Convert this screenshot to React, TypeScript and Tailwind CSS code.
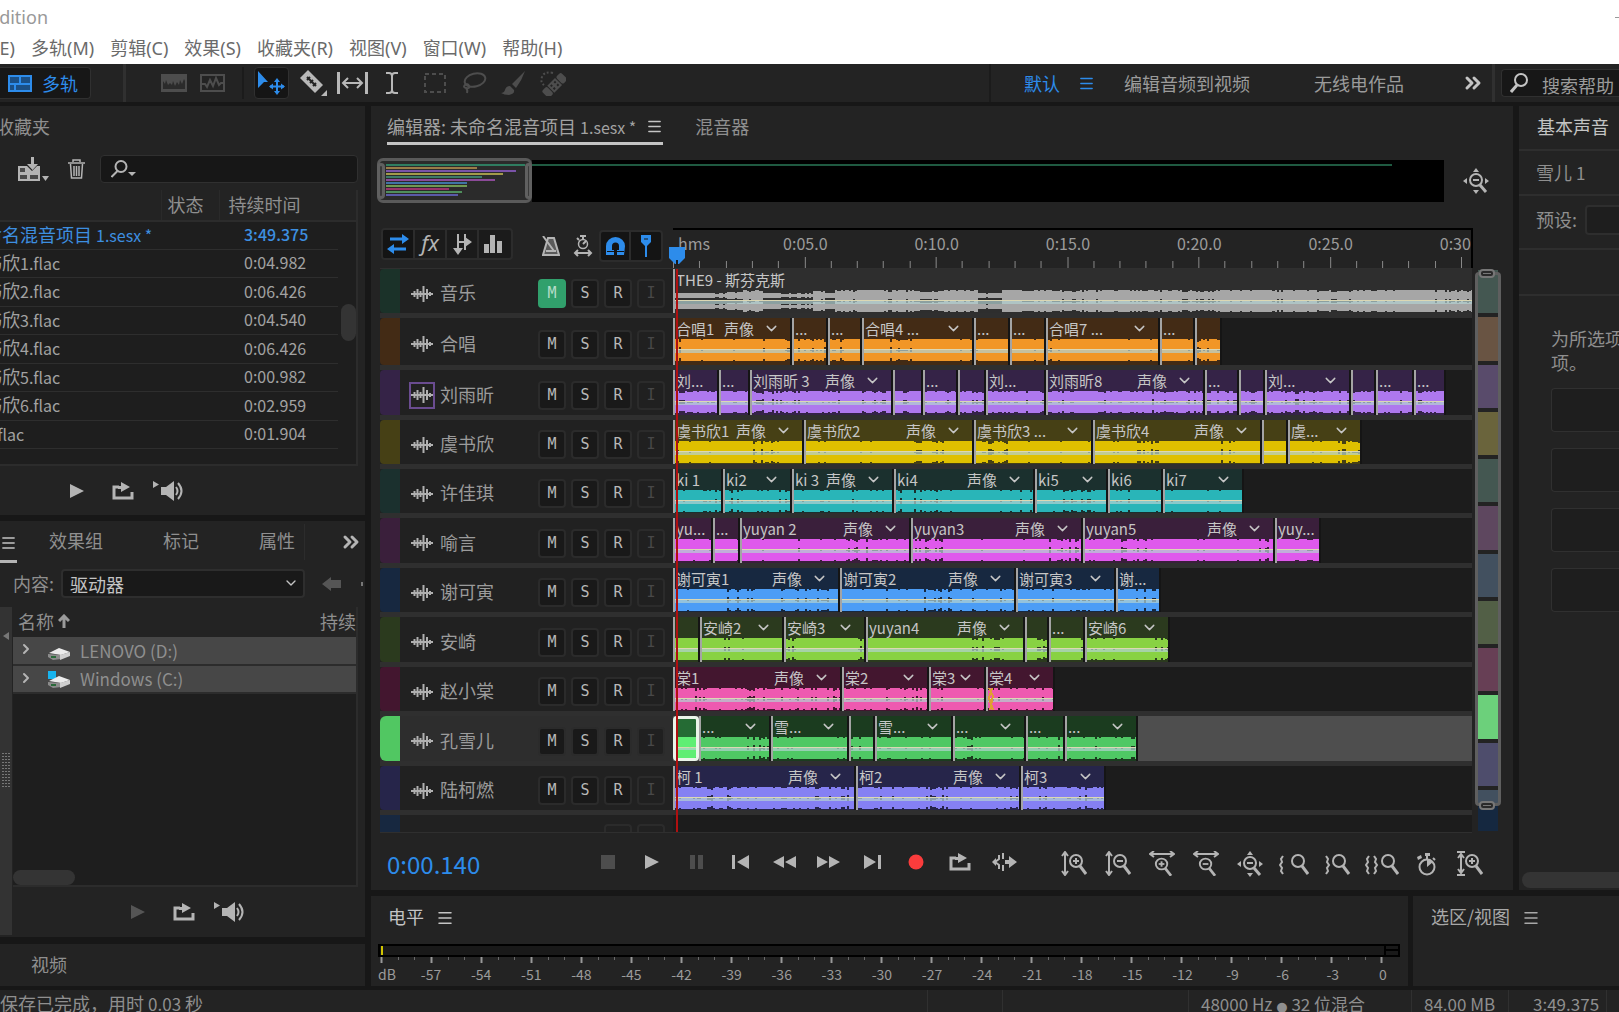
import type { ReactNode } from "react";
import { ChevronDown, ChevronRight, ChevronsRight, Menu } from "lucide-react";

const LANE = 799;
const PX_PER_SECOND = 26.3;

// [start, label, controls]: "p" shows pan + chevron, "v" only the chevron
type Clip = [number, string, ("p" | "v")?];

interface Track {
  name: string;
  height: string;
  strip: string;
  head: string;
  wave: string;
  rough: number;
  end: number;
  clips: Clip[];
  muted?: boolean;
  boxed?: boolean;
  active?: boolean;
}

const TRACKS: Track[] = [
  {
    name: "音乐", height: "h-[49px]", strip: "bg-[#1b3229]", head: "bg-[#2e2e2e]", wave: "#a6a6a6", rough: 0.3, end: 799, muted: true,
    clips: [[0, "THE9 - 斯芬克斯"]],
  },
  {
    name: "合唱", height: "h-[52px]", strip: "bg-[#432b15]", head: "bg-[#432b15]", wave: "#f19626", rough: 0.1, end: 549,
    clips: [[0, "合唱1", "p"], [119, "..."], [155, "..."], [189, "合唱4 ...", "v"], [301, "..."], [337, "..."], [373, "合唱7 ...", "v"], [487, "..."], [522, ""]],
  },
  {
    name: "刘雨昕", height: "h-[50px]", strip: "bg-[#352347]", head: "bg-[#352347]", wave: "#ae78ee", rough: 0.5, end: 773, boxed: true,
    clips: [[0, "刘..."], [46, "..."], [77, "刘雨昕 3", "p"], [220, ""], [250, "..."], [285, ""], [313, "刘..."], [373, "刘雨昕8", "p"], [532, "..."], [566, ""], [592, "刘...", "v"], [678, ""], [703, "..."], [741, "..."]],
  },
  {
    name: "虞书欣", height: "h-[49px]", strip: "bg-[#464015]", head: "bg-[#464015]", wave: "#dfc000", rough: 0.08, end: 689,
    clips: [[0, "虞书欣1", "p"], [131, "虞书欣2", "p"], [301, "虞书欣3 ...", "v"], [420, "虞书欣4", "p"], [589, ""], [615, "虞...", "v"]],
  },
  {
    name: "许佳琪", height: "h-[49px]", strip: "bg-[#1b302e]", head: "bg-[#1b302e]", wave: "#29b5b8", rough: 0.25, end: 571,
    clips: [[0, "ki 1"], [50, "ki2", "v"], [119, "ki 3", "p"], [221, "ki4", "p"], [362, "ki5", "v"], [435, "ki6"], [490, "ki7", "v"]],
  },
  {
    name: "喻言", height: "h-[50px]", strip: "bg-[#3a1f3b]", head: "bg-[#3a1f3b]", wave: "#df59ec", rough: 0.15, end: 648,
    clips: [[0, "yu..."], [40, "..."], [67, "yuyan 2", "p"], [238, "yuyan3", "p"], [410, "yuyan5", "p"], [602, "yuy..."]],
  },
  {
    name: "谢可寅", height: "h-[49px]", strip: "bg-[#172840]", head: "bg-[#172840]", wave: "#4c9df6", rough: 0.25, end: 488,
    clips: [[0, "谢可寅1", "p"], [167, "谢可寅2", "p"], [343, "谢可寅3", "v"], [443, "谢..."]],
  },
  {
    name: "安崎", height: "h-[50px]", strip: "bg-[#2b3a1e]", head: "bg-[#2b3a1e]", wave: "#88d243", rough: 0.08, end: 497,
    clips: [[0, ""], [27, "安崎2", "v"], [111, "安崎3", "v"], [193, "yuyan4", "p"], [352, ""], [376, "..."], [412, "安崎6", "v"]],
  },
  {
    name: "赵小棠", height: "h-[49px]", strip: "bg-[#43162f]", head: "bg-[#43162f]", wave: "#ee59b0", rough: 0.25, end: 382,
    clips: [[0, "棠1", "p"], [169, "棠2", "v"], [256, "棠3", "v"], [313, "棠4", "v"]],
  },
  {
    name: "孔雪儿", height: "h-[50px]", strip: "bg-[#51c762]", head: "bg-[#1b3c1f]", wave: "#4fc864", rough: 0.2, end: 465, active: true,
    clips: [[0, ""], [26, "...", "v"], [98, "雪...", "v"], [176, ""], [202, "雪...", "v"], [280, "...", "v"], [353, "..."], [392, "...", "v"]],
  },
  {
    name: "陆柯燃", height: "h-[49px]", strip: "bg-[#26254a]", head: "bg-[#26254a]", wave: "#8580f3", rough: 0.35, end: 433,
    clips: [[0, "柯 1", "p"], [183, "柯2", "p"], [348, "柯3", "v"]],
  },
];

const FILES = [
  ["虞书欣", "1.flac", "0:04.982"],
  ["虞书欣", "2.flac", "0:06.426"],
  ["虞书欣", "3.flac", "0:04.540"],
  ["虞书欣", "4.flac", "0:06.426"],
  ["虞书欣", "5.flac", "0:00.982"],
  ["虞书欣", "6.flac", "0:02.959"],
  ["雪", "1.flac", "0:01.904"],
];

function musicLevel(x: number) {
  if (x < 52) return 0.4;
  if (x < 66) return 0.6;
  if (x < 88) return 0.85;
  if (x < 138) return 0.4;
  if (x < 150) return 0.75;
  if (x < 160) return 0.45;
  if (x > 301 && x < 325) return 0.45;
  return 0.92;
}

function wavePath(width: number, seed: number, rough: number, music: boolean) {
  let state = seed * 7919 + 13;
  const random = () => {
    state = (state * 16807) % 2147483647;
    return state / 2147483647;
  };
  let d = "";
  for (let x = 0; x < width; x += 2) {
    const r = random();
    const quiet = Math.sin(x * 0.07 + seed) * Math.sin(x * 0.023 + seed * 2) > 0.42;
    let amp = r < rough ? 0.68 + random() * 0.3 : 1;
    if (quiet && r < 0.55) amp = 0.45 + random() * 0.45;
    if (music) amp = Math.min(1, musicLevel(x) * (quiet || r < 0.2 ? 0.65 + random() * 0.4 : 0.95 + random() * 0.2));
    const h = 5.5 * amp;
    d += `M${x} ${5.5 - h}h2v${h * 2}h-2zM${x} ${16.5 - h}h2v${h * 2}h-2z`;
  }
  return d;
}

function Svg({ w, h, className = "", children }: { w: number; h: number; className?: string; children: ReactNode }) {
  return (
    <svg width={w} height={h} viewBox={`0 0 ${w} ${h}`} fill="none" className={`shrink-0 ${className}`} aria-hidden="true">
      {children}
    </svg>
  );
}

function PlayIcon() {
  return <Svg w={16} h={16}><path d="M1 1l14 7-14 7z" fill="currentColor" /></Svg>;
}

function LoopIcon() {
  return (
    <Svg w={22} h={18}>
      <path d="M7 5H2v11h18v-6" stroke="currentColor" strokeWidth="3" />
      <path d="M9 0l9 5-9 5V7H6V4h3z" fill="currentColor" />
    </Svg>
  );
}

function SpeakerIcon() {
  return (
    <Svg w={32} h={20}>
      <path d="M0 0l6 3.500-6 3.500zM8 6h5l8-6v20l-8-6H8z" fill="currentColor" />
      <path d="M23 6q3 4 0 8M25 2q7 8 0 16" stroke="currentColor" strokeWidth="2" />
    </Svg>
  );
}

function Magnifier({ x = 0, sign = "" }: { x?: number; sign?: string }) {
  return (
    <g transform={`translate(${x} 0)`} stroke="currentColor">
      <circle cx="9" cy="10" r="6" strokeWidth="2" />
      <path d="M13 15l6 8" strokeWidth="3" />
      {sign && <path d="M6 10h6" strokeWidth="2" />}
      {sign === "+" && <path d="M9 7v6" strokeWidth="2" />}
    </g>
  );
}

function FourWayZoom() {
  return (
    <Svg w={26} h={26}>
      <g stroke="currentColor">
        <circle cx="13" cy="12" r="6" strokeWidth="2" />
        <path d="M10 12h6" strokeWidth="2" />
        <path d="M17 17l6 7" strokeWidth="3" />
      </g>
      <path d="M13 0l3 4h-6zM13 26l3-4h-6zM0 13l4-3v6zM26 13l-4-3v6z" fill="currentColor" />
    </Svg>
  );
}

function MiniWave() {
  return (
    <Svg w={22} h={16}>
      <path d="M0 8h22" stroke="currentColor" strokeWidth="2" />
      <path d="M3.500 5v6M6.500 3v10M9.500 5v6M12.500 0v16M16 3v10M19 6v4" stroke="currentColor" strokeWidth="2" />
    </Svg>
  );
}

function Transport({ dim }: { dim?: boolean }) {
  return (
    <div className="flex items-center text-[#b4b4b4]">
      <button aria-label="播放" className={`flex w-[46px] justify-center ${dim ? "text-[#555]" : ""}`}><PlayIcon /></button>
      <button aria-label="循环" className="flex w-[46px] justify-center"><LoopIcon /></button>
      <button aria-label="自动播放" className="flex w-[46px] justify-center"><SpeakerIcon /></button>
    </div>
  );
}

function TopBars() {
  return (
    <header className="shrink-0 bg-white text-[18px] text-[#6a6a6a] [font-family:'Noto_Sans','Noto_Sans_CJK_SC',sans-serif]">
      <div className="flex h-[34px] items-center justify-between overflow-hidden">
        <div className="flex w-12 justify-end whitespace-nowrap text-[#999]">Adobe Audition</div>
        <span className="h-px w-1 bg-[#999]" />
      </div>
      <nav className="flex h-[30px] items-center gap-4 whitespace-nowrap pb-[2px]">
        <button className="flex w-[15px] justify-end overflow-hidden">编辑(E)</button>
        <button>多轨(M)</button>
        <button>剪辑(C)</button>
        <button>效果(S)</button>
        <button>收藏夹(R)</button>
        <button>视图(V)</button>
        <button>窗口(W)</button>
        <button>帮助(H)</button>
      </nav>
    </header>
  );
}

function Toolbar() {
  return (
    <div className="flex h-[38px] shrink-0 items-center justify-between overflow-hidden bg-[#232323]">
      <div className="flex h-full items-center text-[#b8b8b8]">
        <button className="flex h-8 w-[91px] items-center gap-[10px] rounded-r border border-l-0 border-[#303030] bg-[#171717] pl-2 text-[18px] text-[#2d8ceb]">
          <Svg w={24} h={17}>
            <path d="M0 0h24v17H0z" fill="#2d8ceb" />
            <path d="M2 2h9v6H2zM13 2h9v6h-9zM2 10h4v5H2zM8 10h14v5H8z" fill="#1b4f85" />
          </Svg>
          多轨
        </button>
        <span className="ml-8 h-full w-[3px] bg-[#303030]" />
        <button aria-label="频谱" className="ml-[35px] text-[#4d4d4d]">
          <Svg w={26} h={18}>
            <path d="M0 0h26v18H0z" fill="currentColor" />
            <path d="M2 15V7l2 3 1-4 2 5 2-2 2 2 1-4 2 5 2-4 2 3 1-5 2 4 2-5 1 2v8z" fill="#2b2b2b" />
          </Svg>
        </button>
        <button aria-label="波形" className="ml-[13px] text-[#4d4d4d]">
          <Svg w={25} h={18}>
            <path d="M1 1h23v16H1z" stroke="currentColor" strokeWidth="2" />
            <path d="M2 10h3l2 3 3-7 3 6 3-8 3 7 2-2h3" stroke="currentColor" strokeWidth="2" />
          </Svg>
        </button>
        <span className="ml-[17px] h-8 w-[2px] bg-[#1b1b1b]" />
        <button aria-label="移动工具" className="ml-[10px] flex h-8 w-[35px] items-center justify-center rounded border border-[#303030] bg-[#151515] text-[#2d8ceb]">
          <Svg w={27} h={24}>
            <path d="M0 0l10 11H6l-6 6z" fill="currentColor" />
            <path d="M19 9v13M12 15.500h14" stroke="currentColor" strokeWidth="2" />
            <path d="M19 7l3 4h-6zM19 24l3-4h-6zM11 15.500l4-3v6zM27 15.500l-4-3v6z" fill="currentColor" />
          </Svg>
        </button>
        <button aria-label="切割工具" className="ml-[10px]">
          <Svg w={28} h={26}>
            <path d="M9 0l15 15-8 8L1 8z" fill="currentColor" />
            <path d="M8 7l9 9M8 10l3-3M11 13l3-3M14 16l3-3" stroke="#232323" strokeWidth="2" />
            <path d="M28 20v6h-6z" fill="currentColor" />
          </Svg>
        </button>
        <button aria-label="滑动工具" className="ml-[10px]">
          <Svg w={31} h={22}>
            <path d="M1.500 0v22M29.500 0v22" stroke="currentColor" strokeWidth="3" />
            <path d="M6 11h19M11 6l-5 5 5 5M20 6l5 5-5 5" stroke="currentColor" strokeWidth="2" />
          </Svg>
        </button>
        <button aria-label="时间选择工具" className="ml-[18px]">
          <Svg w={12} h={22}>
            <path d="M0 1h3q3 0 3 3 0-3 3-3h3M6 3v16M0 21h3q3 0 3-3 0 3 3 3h3" stroke="currentColor" strokeWidth="2" />
          </Svg>
        </button>
        <button aria-label="框选工具" className="ml-[26px] text-[#4d4d4d]">
          <Svg w={22} h={20}>
            <path d="M1 1h20v18H1z" stroke="currentColor" strokeWidth="2" strokeDasharray="4 3" />
          </Svg>
        </button>
        <button aria-label="套索工具" className="ml-[15px] text-[#4d4d4d]">
          <Svg w={26} h={22}>
            <ellipse cx="14" cy="8" rx="10.500" ry="6.500" transform="rotate(-14 14 8)" stroke="currentColor" strokeWidth="2" />
            <path d="M5 12q-4 3 0 4t3-2-4-1M5 16q2 2 1 5" stroke="currentColor" strokeWidth="2" />
          </Svg>
        </button>
        <button aria-label="画笔工具" className="ml-[14px] text-[#4d4d4d]">
          <Svg w={25} h={24}>
            <path d="M24 0L11 13l4 4q6-8 9-17zM9 15q-4 0-5 4-1 3-4 3 3 2 8 2 6-1 5-5z" fill="currentColor" />
          </Svg>
        </button>
        <button aria-label="修复工具" className="ml-[14px] text-[#4d4d4d]">
          <Svg w={26} h={25}>
            <g transform="rotate(-45 15 14)">
              <rect x="1" y="9" width="7" height="10" rx="2" fill="currentColor" />
              <rect x="9" y="9" width="11" height="10" fill="currentColor" />
              <rect x="21" y="9" width="7" height="10" rx="2" fill="currentColor" />
              <path d="M11 12h2M16 12h2M11 16h2M16 16h2" stroke="#232323" strokeWidth="2" />
            </g>
            <path d="M13 2Q4 0 2 6q-2 5 2 8" stroke="currentColor" strokeWidth="2" strokeDasharray="2 2" />
          </Svg>
        </button>
      </div>
      <div className="flex h-full items-center whitespace-nowrap text-[18px] text-[#9b9b9b]">
        <span className="h-full w-[2px] bg-[#1b1b1b]" />
        <button className="ml-[33px] text-[#2d8ceb]">默认</button>
        <button aria-label="工作区菜单" className="ml-[18px] text-[#2d8ceb]"><Menu size={17} strokeWidth={2} /></button>
        <button className="ml-[29px]">编辑音频到视频</button>
        <button className="ml-[64px]">无线电作品</button>
        <button aria-label="更多" className="ml-[57px] text-[#c4c4c4]"><ChevronsRight size={24} strokeWidth={3} /></button>
        <span className="ml-[7px] h-full w-[3px] bg-[#303030]" />
        <label className="ml-[6px] flex h-7 w-[118px] items-center gap-[14px] rounded-l border border-r-0 border-[#303030] bg-[#171717] pl-2 text-[#c4c4c4]">
          <Svg w={18} h={20}>
            <circle cx="11" cy="7" r="6" stroke="currentColor" strokeWidth="2" />
            <path d="M7 12l-6 7" stroke="currentColor" strokeWidth="3" />
          </Svg>
          <input aria-label="搜索帮助" placeholder="搜索帮助" className="mt-1 w-20 bg-transparent outline-none placeholder:text-[#9b9b9b]" />
        </label>
      </div>
    </div>
  );
}

function FilesPanel() {
  return (
    <section className="flex h-[409px] shrink-0 flex-col overflow-hidden bg-[#232323]">
      <div className="flex h-[42px] w-[50px] items-center justify-end overflow-hidden whitespace-nowrap pb-[2px] text-[18px]">收藏夹</div>
      <div className="flex h-[42px] items-center pr-[7px] text-[#b4b4b4]">
        <button aria-label="导入" className="ml-[18px]">
          <Svg w={31} h={24}>
            <path d="M0 9h9l5 5 5-5h3v15H0z" fill="currentColor" />
            <path d="M2 11h5v4H2zM2 18h7v4H2zM12 18h8v4h-8z" fill="#4a4a4a" />
            <path d="M13 0h3v7h4l-5.500 6L9 7h4z" fill="currentColor" />
            <path d="M24 19h7l-3.500 5z" fill="currentColor" />
          </Svg>
        </button>
        <button aria-label="删除" className="ml-[19px]">
          <Svg w={17} h={20}>
            <path d="M0 4h17M5 3V1h7v2M2.500 5l1 14h10l1-14M6 7v10M8.500 7v10M11 7v10" stroke="currentColor" strokeWidth="1.500" />
          </Svg>
        </button>
        <label className="ml-[15px] flex h-7 flex-1 items-center rounded border border-[#303030] bg-[#171717] pl-[10px]">
          <Svg w={25} h={18}>
            <circle cx="10" cy="6.500" r="5.500" stroke="currentColor" strokeWidth="2" />
            <path d="M6.500 11l-6 6" stroke="currentColor" strokeWidth="2" />
            <path d="M17 12h8l-4 4z" fill="currentColor" />
          </Svg>
          <input aria-label="搜索文件" className="w-full bg-transparent outline-none" />
        </label>
      </div>
      <div className="relative mr-[7px] h-[276px] overflow-hidden border-r-2 border-b-2 border-[#2c2c2c] bg-[#1e1e1e]">
        <table className="-ml-[34px] w-[392px] table-fixed border-collapse text-left">
          <colgroup>
            <col className="w-[195px]" />
            <col className="w-[58px]" />
            <col className="w-[119px]" />
            <col />
          </colgroup>
          <thead className="bg-[#232323] text-[18px] leading-6">
            <tr className="h-[31px] border-b-2 border-[#2c2c2c]">
              <th />
              <th className="border-l border-[#2a2a2a] pb-[3px] pl-[6px] font-normal">状态</th>
              <th className="border-l border-[#2a2a2a] pb-[3px] pl-[9px] font-normal">持续时间</th>
              <th />
            </tr>
          </thead>
          <tbody className="text-[18px] leading-[22px] text-[#a2a2a2]">
            <tr className="text-[#3d8fe0]">
              <td className="h-7 whitespace-nowrap border-b border-[#2e2e2e] pb-[2px]">
                未命名混音项目 <span className="text-[16px]">1.sesx *</span>
              </td>
              <td className="border-b border-[#2e2e2e]" />
              <td className="border-b border-[#2e2e2e] pb-[2px] pl-[25px] text-[16px] font-medium">3:49.375</td>
              <td />
            </tr>
            {FILES.map(([singer, file, time], i) => (
              <tr key={file + time}>
                <td className={`${i % 2 ? "h-[29px]" : "h-7"} whitespace-nowrap border-b border-[#2e2e2e] pb-[2px]`}>
                  {singer}<span className="text-[16px]">{file}</span>
                </td>
                <td className="border-b border-[#2e2e2e]" />
                <td className="border-b border-[#2e2e2e] pb-[2px] pl-[25px] text-[16px]">{time}</td>
                <td />
              </tr>
            ))}
          </tbody>
        </table>
        <span className="absolute right-0 top-[114px] h-[37px] w-[15px] rounded-full bg-[#343434]" />
      </div>
      <div className="flex flex-1 items-center pl-[54px]"><Transport /></div>
    </section>
  );
}

function DriveIcon({ system }: { system?: boolean }) {
  return (
    <Svg w={22} h={18}>
      {system && <path d="M0 1h8v8H0z" fill="#18b4ee" />}
      <path d="M1 11l10-5 11 4-9 3z" fill="#ececec" />
      <path d="M0 12l13 1v4l-8 1-5-3z" fill="#8c8c8c" />
      <path d="M12 13l10-3v4l-10 4z" fill="#cfcfcf" />
      <path d="M3 15h5" stroke="#2b6a3b" strokeWidth="2" />
    </Svg>
  );
}

function MediaPanel() {
  return (
    <section className="mt-[6px] flex min-h-0 flex-1 flex-col overflow-hidden bg-[#232323]">
      <div className="flex h-[42px] shrink-0 items-center text-[18px]">
        <button aria-label="面板菜单" className="flex h-[41px] w-[17px] items-center justify-end border-b-[3px] border-[#b4b4b4] pt-1 text-[#c4c4c4]"><Menu size={18} /></button>
        <button className="ml-8 pb-[3px]">效果组</button>
        <button className="ml-[60px] pb-[3px]">标记</button>
        <button className="ml-[60px] h-9 border-r border-[#2c2c2c] pb-[3px] pr-[9px]">属性</button>
        <button aria-label="更多" className="ml-[34px] text-[#b4b4b4]"><ChevronsRight size={24} strokeWidth={3} /></button>
      </div>
      <div className="flex h-11 shrink-0 items-center whitespace-nowrap pb-[3px] pl-[13px] text-[18px]">
        <label htmlFor="content">内容:</label>
        <div className="relative ml-[7px] w-[244px] shrink-0">
          <select id="content" className="h-[29px] w-full appearance-none rounded border-2 border-[#2e2e2e] bg-[#191919] pl-[7px] leading-6 text-[#c4c4c4]">
            <option>驱动器</option>
          </select>
          <ChevronDown size={16} className="pointer-events-none absolute right-[6px] top-[6px] text-[#c4c4c4]" />
        </div>
        <button aria-label="后退" className="ml-[17px] text-[#555]">
          <Svg w={19} h={14}><path d="M0 7l9-7v3h10v8H9v3z" fill="currentColor" /></Svg>
        </button>
        <span className="ml-[20px] h-1 w-[2px] bg-[#777]" />
      </div>
      <div className="flex min-h-0 flex-1">
        <div className="mb-[2px] flex w-3 shrink-0 flex-col items-center bg-[#333] pt-[25px]">
          <Svg w={6} h={8}><path d="M6 0v8L0 4z" fill="#777" /></Svg>
          <Svg w={8} h={36} className="mt-[113px]">
            <path d="M1 0v36M4 0v36M7 0v36" stroke="#777" strokeWidth="2" strokeDasharray="1 2" />
          </Svg>
        </div>
        <div className="flex flex-1 flex-col pl-px pr-[7px]">
          <div className="relative min-h-0 flex-1 border-r-2 border-b-2 border-[#2c2c2c] bg-[#1e1e1e]">
            <table className="w-full border-collapse text-left">
              <thead className="bg-[#232323] text-[18px] leading-6">
                <tr className="h-[30px]">
                  <th className="pb-[3px] pl-[5px] font-normal">
                    <span className="flex items-center gap-1">
                      名称
                      <Svg w={12} h={14}><path d="M6 14V2M1 7l5-5 5 5" stroke="#9b9b9b" strokeWidth="3" /></Svg>
                    </span>
                  </th>
                  <th className="w-9 whitespace-nowrap pb-[3px] font-normal">持续</th>
                </tr>
              </thead>
              <tbody className="bg-[#474747] text-[17px] text-[#8f8f8f]">
                {["LENOVO (D:)", "Windows (C:)"].map((name, i) => (
                  <tr key={name} className="h-7 border-b-2 border-[#2c2c2c]">
                    <td colSpan={2}>
                      <span className="flex items-center leading-[26px]">
                        <ChevronRight size={16} strokeWidth={3} className="ml-[5px] mb-[3px] text-[#b4b4b4]" />
                        <span className="ml-[14px] mr-[10px]"><DriveIcon system={i === 1} /></span>
                        {name}
                      </span>
                    </td>
                  </tr>
                ))}
              </tbody>
            </table>
            <span className="absolute bottom-0 left-0 h-[15px] w-[62px] rounded-full bg-[#343434]" />
          </div>
          <div className="flex h-[50px] shrink-0 items-center pl-[102px]"><Transport dim /></div>
        </div>
      </div>
    </section>
  );
}

const OVERVIEW = [
  ["#2f7d60", 145], ["#9a7c48", 91], ["#7a53a8", 130], ["#a39a4a", 117], ["#3d7a68", 96], ["#8b4a98", 109],
  ["#3f74a6", 81], ["#6f9a52", 81], ["#98346a", 63], ["#4f8f5c", 76], ["#5a5aa8", 72],
] as const;

function Overview() {
  return (
    <div className="mt-[13px] flex h-[45px] shrink-0 items-center pl-[6px]">
      <div className="flex h-[45px] w-[155px] shrink-0 items-center justify-between rounded-md border-[3px] border-[#5a5a5a] bg-[#2b2b2b]">
        <span className="-ml-[3px] h-9 w-[9px] rounded-sm border-[3px] border-[#606060] bg-[#3a3a3a]" />
        <Svg w={140} h={39}>
          {OVERVIEW.map(([color, width], i) => (
            <path key={color} d={`M1 ${4 + i * 3}h${width}`} stroke={color} strokeWidth="2" />
          ))}
        </Svg>
        <span className="-mr-[3px] h-9 w-[9px] rounded-sm border-[3px] border-[#606060] bg-[#3a3a3a]" />
      </div>
      <div className="h-[42px] flex-1 bg-black pr-[52px] pt-1"><div className="h-[2px] bg-[#1f5a41]" /></div>
      <button aria-label="全部缩小" className="ml-[19px] mr-6 text-[#b4b4b4]"><FourWayZoom /></button>
    </div>
  );
}

const SECONDS = Array.from({ length: 31 }, (_, i) => i);

function Ruler() {
  const step = { width: `${((5 * PX_PER_SECOND) / LANE) * 100}%` };
  const half = { width: `${((2.5 * PX_PER_SECOND) / LANE) * 100}%` };
  return (
    <div className="relative h-full min-w-0 flex-1 border-t-2 border-r-2 border-black text-[16px] text-[#9b9b9b]">
      <div className="flex h-[27px] items-center overflow-hidden whitespace-nowrap pb-[2px]">
        <span style={half} className="shrink-0 pl-[5px]">hms</span>
        {["0:05.0", "0:10.0", "0:15.0", "0:20.0", "0:25.0", "0:30.0"].map((label) => (
          <span key={label} style={step} className="shrink-0 pl-[2px] text-center">{label}</span>
        ))}
      </div>
      <svg className="h-[12px] w-full" viewBox={`0 0 ${LANE} 12`} preserveAspectRatio="none" aria-hidden="true">
        {SECONDS.map((s) => (
          <path key={s} d={`M${Math.round(s * PX_PER_SECOND) + 0.5} ${s % 5 ? 4 : 0}V12`} stroke="#8a8a8a" />
        ))}
      </svg>
      <Svg w={16} h={18} className="absolute -left-1 top-[17px]">
        <path d="M0 0h16v11l-6 6H6l-6-6z" fill="#2d8ceb" />
        <path d="M8 13v5" stroke="#1a1a1a" strokeWidth="2" />
      </Svg>
    </div>
  );
}

function ToolRow() {
  return (
    <div className="mt-[25px] flex h-10 shrink-0 pl-[10px] text-[#b4b4b4]">
      <div className="flex h-8 divide-x-2 divide-[#2c2c2c] overflow-hidden rounded border-2 border-[#2c2c2c] bg-[#1b1b1b]">
        <button aria-label="输入/输出" className="flex w-8 items-center justify-center bg-[#141414] text-[#2d8ceb]">
          <Svg w={22} h={20}>
            <path d="M3 5h14M5 15h14" stroke="currentColor" strokeWidth="3" />
            <path d="M15 0l7 5-7 5zM7 10l-7 5 7 5z" fill="currentColor" />
          </Svg>
        </button>
        <button aria-label="效果" className="w-8 pb-1 text-[22px] italic leading-6 [font-family:'Noto_Sans',sans-serif]">fx</button>
        <button aria-label="发送" className="flex w-8 items-center justify-center">
          <Svg w={20} h={22}>
            <path d="M6 1v16M13 1v16M6 9h8" stroke="currentColor" strokeWidth="2" />
            <path d="M13 4l7 5-7 5zM1 15h10l-5 7z" fill="currentColor" />
          </Svg>
        </button>
        <button aria-label="EQ" className="flex w-8 items-center justify-center pr-1">
          <Svg w={18} h={18}><path d="M0 9h5v9H0zM6 0h5v18H6zM13 6h5v12h-5z" fill="currentColor" /></Svg>
        </button>
      </div>
      <div className="ml-[22px] mr-[10px] mt-[2px] flex h-8">
        <button aria-label="节拍器" className="flex w-8 items-center justify-center">
          <Svg w={18} h={20}>
            <path d="M6 2h6l5 17H1z" fill="#5a5a5a" stroke="currentColor" strokeWidth="2" />
            <path d="M1 0l11 15M4 15h10" stroke="currentColor" strokeWidth="2" />
          </Svg>
        </button>
        <button aria-label="时间伸缩" className="flex w-8 items-center justify-center">
          <Svg w={20} h={22}>
            <circle cx="10" cy="9" r="4.500" stroke="currentColor" strokeWidth="1.500" />
            <path d="M10 9l3-3M7 1h6M10 1v3M4 3l2 2M2 18h16M5 15l-3 3 3 3M15 15l3 3-3 3" stroke="currentColor" strokeWidth="2" />
          </Svg>
        </button>
        <button aria-label="对齐" className="flex w-8 items-center justify-center rounded-l border-2 border-[#2c2c2c] bg-[#141414] text-[#2d8ceb]">
          <Svg w={19} h={19}>
            <path d="M0 18V9a9.500 9 0 0 1 19 0l-1 9h-7v-5h2V9a3.500 3.500 0 0 0-7 0v4h2v5H1z" fill="currentColor" />
            <path d="M1 14.500h7M11 14.500h7" stroke="#141414" />
          </Svg>
        </button>
        <button aria-label="标记" className="flex w-8 items-center justify-center rounded-r border-2 border-l-0 border-[#2c2c2c] bg-[#141414] text-[#2d8ceb]">
          <Svg w={12} h={22}>
            <path d="M1 0h10v7l-4 4H5L1 7z" fill="currentColor" />
            <path d="M6 10v12" stroke="currentColor" strokeWidth="2" />
            <path d="M4 4h4" stroke="#141414" />
          </Svg>
        </button>
      </div>
      <Ruler />
    </div>
  );
}

function TrackClip({ track, index, seed }: { track: Track; index: number; seed: number }) {
  const [start, label, controls] = track.clips[index];
  const end = index + 1 < track.clips.length ? track.clips[index + 1][0] : track.end;
  const width = end - start;
  const selected = track.active && index === 0;
  const wave = width - 4;
  return (
    <div
      style={{ width: `${(width / LANE) * 100}%` }}
      className={
        selected
          ? "flex shrink-0 flex-col overflow-hidden rounded-sm border-[3px] border-[#eaf5ea] bg-[#256b34]"
          : `flex shrink-0 flex-col overflow-hidden border-l-2 border-l-[#a4a4a4] ${track.muted ? "" : "border-r-2 border-r-[#151515]"} ${track.head}`
      }
    >
      <div className={`flex shrink-0 items-center whitespace-nowrap pl-px text-[15px] leading-5 text-[#c6c6c6] ${selected ? "h-[18px]" : "h-[21px]"}`}>
        <span className="flex-1">{label}</span>
        {controls === "p" && <span className="pr-[9px]">声像</span>}
        {controls && <ChevronDown size={17} className="mr-[10px]" />}
      </div>
      <svg className={`w-full shrink-0 ${selected ? "h-[21px]" : "h-[22px]"}`} viewBox={`0 0 ${wave} 22`} preserveAspectRatio="none" shapeRendering="crispEdges" aria-hidden="true">
        <path d={wavePath(wave, seed, track.rough, !!track.muted)} fill={selected ? "#5fee74" : track.wave} />
        <path d={`M0 10.500H${wave}`} stroke="#dcd8b4" strokeWidth="1" />
        <path d={`M0 12.500H${wave}`} stroke="#b4d2d2" strokeOpacity="0.7" strokeWidth="3" />
        {label === "棠4" && <path d="M1 0l4 8-3 14M4 0L1 10l4 12" stroke="#e0a030" strokeWidth="2" fill="none" />}
      </svg>
    </div>
  );
}

function TrackRow({ track, seed }: { track: Track; seed: number }) {
  return (
    <div className={`flex shrink-0 border-b-[5px] border-[#2f2f2f] ${track.height} ${track.active ? "bg-[#2d2d2d]" : "bg-[#212121]"}`}>
      <div className="flex w-[293px] shrink-0">
        <span className={`w-5 ${track.strip} ${track.active ? "rounded-l-md" : "rounded-l-sm"}`} />
        <div className="flex flex-1 items-center pt-[5px]">
          <span className={`ml-[9px] flex h-[27px] w-[26px] items-center justify-center text-[#b0b0b0] ${track.boxed ? "border-2 border-[#6a4c90]" : ""}`}><MiniWave /></span>
          <span className="ml-[5px] flex-1 pb-[2px] text-[18px] text-[#9b9b9b]">{track.name}</span>
          <div className="mr-[8px] flex gap-[5px] [font-family:'DejaVu_Sans_Mono',monospace]">
            {["M", "S", "R", "I"].map((b) => (
              <button
                key={b}
                className={`h-[29px] w-7 rounded border-2 text-[15px] ${
                  b === "M" && track.muted
                    ? "border-[#31a06c] bg-[#31a06c] text-[#b5dcc8]"
                    : b === "I"
                      ? "border-[#2b2b2b] bg-[#202020] text-[#484848]"
                      : "border-[#2b2b2b] bg-[#191919] text-[#b8b8b8]"
                }`}
              >
                {b}
              </button>
            ))}
          </div>
        </div>
      </div>
      <div className={`flex min-w-0 flex-1 overflow-hidden ${track.active ? "bg-[#4e4e4e]" : "bg-[#1c1c1c]"}`}>
        {track.clips.map((clip, i) => (
          <TrackClip key={clip[0]} track={track} index={i} seed={seed * 31 + i} />
        ))}
      </div>
    </div>
  );
}

function ScrollHandle({ className }: { className: string }) {
  return (
    <span className={`absolute left-1 flex h-[9px] w-4 items-center justify-center rounded border-2 border-[#777] bg-[#2a2a2a] ${className}`}>
      <span className="h-px w-2 bg-[#777]" />
    </span>
  );
}

function TrackScroll() {
  const colors = [
    "bg-[#445751]", "bg-[#695443]", "bg-[#594b6b]", "bg-[#6a643c]", "bg-[#445751]", "bg-[#5e475f]",
    "bg-[#42505f]", "bg-[#525f46]", "bg-[#673f55]", "bg-[#6cd07b]", "bg-[#4e4d6c]",
  ];
  return (
    <div className="relative ml-[3px] flex w-[26px] shrink-0 flex-col gap-1 px-[3px] pb-[2px] pt-[2px]">
      {colors.map((c, i) => (
        <span key={i} className={`flex-1 ${c}`} />
      ))}
      <div className="flex h-[41px] flex-col">
        <span className="h-[15px] bg-[#42505f]" />
        <span className="flex-1 bg-[#152840]" />
      </div>
      <span className="absolute inset-x-0 bottom-[27px] top-[4px] rounded border-[3px] border-[#5f5f5f]" />
      <ScrollHandle className="top-px" />
      <ScrollHandle className="bottom-[23px]" />
    </div>
  );
}

function TransportBar() {
  const left: [string, ReactNode][] = [
    ["停止", <Svg w={14} h={14} className="text-[#4d4d4d]"><path d="M0 0h14v14H0z" fill="currentColor" /></Svg>],
    ["播放", <PlayIcon />],
    ["暂停", <Svg w={13} h={14} className="text-[#4d4d4d]"><path d="M0 0h5v14H0zM8 0h5v14H8z" fill="currentColor" /></Svg>],
    ["到开头", <Svg w={17} h={14}><path d="M0 0h3v14H0zM17 0v14L5 7z" fill="currentColor" /></Svg>],
    ["快退", <Svg w={23} h={12}><path d="M11 0v12L0 6zM23 0v12L12 6z" fill="currentColor" /></Svg>],
    ["快进", <Svg w={23} h={12}><path d="M0 0v12l11-6zM12 0v12l11-6z" fill="currentColor" /></Svg>],
    ["到结尾", <Svg w={17} h={14}><path d="M14 0h3v14h-3zM0 0v14l12-7z" fill="currentColor" /></Svg>],
    ["录制", <Svg w={16} h={16}><circle cx="8" cy="8" r="7.500" fill="#fa3c3c" /></Svg>],
    ["循环", <LoopIcon />],
    ["跳过", (
      <Svg w={25} h={18}>
        <path d="M7 2v4L3 9l4 3v4M11 0v6M11 12v6" stroke="currentColor" strokeWidth="2" />
        <path d="M0 9l4-4v8zM13 7h4V3l8 6-8 6v-4h-4z" fill="currentColor" />
      </Svg>
    )],
  ];
  const right: [string, ReactNode][] = [
    ["垂直放大", <Svg w={26} h={25}><path d="M4 2v21M1 5l3-4 3 4M1 20l3 4 3-4" stroke="currentColor" strokeWidth="2" /><Magnifier x={6} sign="+" /></Svg>],
    ["垂直缩小", <Svg w={26} h={25}><path d="M4 2v21M1 5l3-4 3 4M1 20l3 4 3-4" stroke="currentColor" strokeWidth="2" /><Magnifier x={6} sign="-" /></Svg>],
    ["水平放大", <Svg w={26} h={25}><path d="M2 3h22M5 0L1 3l4 3M21 0l4 3-4 3" stroke="currentColor" strokeWidth="2" /><g transform="translate(4 4) scale(.95 .9)"><Magnifier sign="+" /></g></Svg>],
    ["水平缩小", <Svg w={26} h={25}><path d="M2 3h22M5 0L1 3l4 3M21 0l4 3-4 3" stroke="currentColor" strokeWidth="2" /><g transform="translate(4 4) scale(.95 .9)"><Magnifier sign="-" /></g></Svg>],
    ["全部缩小", <FourWayZoom />],
    ["放大入点", <Svg w={30} h={25}><path d="M4 5L2 8l1 3-2 3 2 3-1 3 2 3" stroke="currentColor" strokeWidth="2" /><Magnifier x={10} /></Svg>],
    ["放大出点", <Svg w={28} h={25}><path d="M2 5l2 3-1 3 2 3-2 3 1 3-2 3" stroke="currentColor" strokeWidth="2" /><Magnifier x={6} /></Svg>],
    ["缩放至选区", <Svg w={34} h={25}><path d="M4 5L2 8l1 3-2 3 2 3-1 3 2 3M9 5l2 3-1 3 2 3-2 3 1 3-2 3" stroke="currentColor" strokeWidth="2" /><Magnifier x={14} /></Svg>],
    ["缩放时间", (
      <Svg w={21} h={24}>
        <circle cx="11" cy="15" r="7.500" stroke="currentColor" strokeWidth="2" />
        <path d="M11 15V7l6 3zM9 1h5v3H9zM1 5l4-2 1 3-4 2z" fill="currentColor" />
        <path d="M11 3v4M17 6l2 2" stroke="currentColor" strokeWidth="2" />
      </Svg>
    )],
    ["缩放轨道", <Svg w={26} h={25}><path d="M0 1h8M0 24h8M4 3v19M1 7l3-4 3 4M1 18l3 4 3-4" stroke="currentColor" strokeWidth="2" /><Magnifier x={6} sign="+" /></Svg>],
  ];
  return (
    <div className="flex h-[57px] shrink-0 items-center justify-between pl-4 pr-[21px] pt-1 text-[#b4b4b4]">
      <span className="text-[24px] text-[#2d8ceb]">0:00.140</span>
      <div className="flex gap-[26px]">
        {[left, right].map((group, i) => (
          <div key={i} className={`flex ${i ? "" : "pb-1"}`}>
            {group.map(([label, icon]) => (
              <button key={label} aria-label={label} className="flex w-11 items-center justify-center">{icon}</button>
            ))}
          </div>
        ))}
      </div>
    </div>
  );
}

function Editor() {
  return (
    <section className="flex min-w-0 flex-1 flex-col bg-[#232323]">
      <div className="flex h-[39px] shrink-0 pl-4 text-[18px]">
        <div className="flex items-center gap-[10px] border-b-[3px] border-[#c4c4c4] pt-1 text-[#a2a2a2]">
          <button>编辑器: 未命名混音项目 <span className="text-[16px]">1.sesx *</span></button>
          <button aria-label="编辑器菜单" className="text-[#c4c4c4]"><Menu size={17} /></button>
        </div>
        <button className="ml-8 pb-[2px] pt-[3px]">混音器</button>
      </div>
      <Overview />
      <div className="flex min-h-0 flex-1 flex-col">
        <div className="mr-[40px]"><ToolRow /></div>
        <div className="flex min-h-0 flex-1 pl-[9px] pr-3">
          <div className="relative flex min-w-0 flex-1 flex-col overflow-hidden border-b border-t border-[#2f2f2f]">
            {TRACKS.map((track, i) => (
              <TrackRow key={track.name} track={track} seed={i + 1} />
            ))}
            <div className="flex h-[50px] shrink-0 bg-[#212121]">
              <div className="flex w-[293px] shrink-0 items-center">
                <span className="h-full w-5 bg-[#172840]" />
              </div>
              <div className="flex-1 bg-[#1c1c1c]" />
            </div>
            <span className="absolute bottom-0 left-[296px] top-0 w-[2px] bg-[#b01010]" />
            <span className="absolute bottom-0 left-[224px] h-2 w-7 rounded-t border-2 border-b-0 border-[#2b2b2b]" />
            <span className="absolute bottom-0 left-[257px] h-2 w-7 rounded-t border-2 border-b-0 border-[#2b2b2b]" />
          </div>
          <TrackScroll />
        </div>
      </div>
      <TransportBar />
    </section>
  );
}

function SoundPanel() {
  return (
    <aside className="flex w-[100px] shrink-0 flex-col overflow-hidden whitespace-nowrap bg-[#232323] text-[18px]">
      <div className="flex h-[45px] shrink-0 items-center border-b-2 border-[#2e2e2e] pb-[2px] pl-[18px] text-[#c4c4c4]">基本声音</div>
      <div className="flex h-[45px] shrink-0 items-center border-b-2 border-[#2e2e2e] pl-[17px]">
        <span>雪儿 <span className="text-[17px]">1</span></span>
      </div>
      <div className="flex h-[54px] shrink-0 items-center border-b-2 border-[#2e2e2e] pb-[5px] pl-[17px]">
        <label htmlFor="preset">预设:</label>
        <input id="preset" className="ml-[8px] h-[30px] w-24 shrink-0 rounded border-2 border-[#2e2e2e] bg-[#1e1e1e]" />
      </div>
      <div className="h-[46px] shrink-0 border-b-2 border-[#2e2e2e]" />
      <p className="mb-[14px] ml-8 mt-[30px] leading-6">为所选项<br />项。</p>
      <div className="ml-[32px] flex flex-col gap-4">
        {["对话", "音乐", "SFX", "环境"].map((type) => (
          <button key={type} aria-label={type} className="h-11 rounded-l border border-r-0 border-[#303030] bg-[#1e1e1e]" />
        ))}
      </div>
      <span className="mb-[2px] ml-[3px] mt-auto h-4 w-40 rounded-full bg-[#343434]" />
    </aside>
  );
}

const DB = Array.from({ length: 20 }, (_, i) => (i === 19 ? "0" : String(-57 + i * 3)));

function Levels() {
  return (
    <section className="min-w-0 flex-1 bg-[#232323] pl-[7px]">
      <div className="flex h-[48px] items-center gap-3 pb-2 pl-[10px] text-[18px] text-[#c4c4c4]">
        电平
        <button aria-label="电平菜单" className="pt-[3px]"><Menu size={18} /></button>
      </div>
      <div className="mr-2 flex h-[13px] border-2 border-black bg-[#191919] pl-px">
        <span className="w-[2px] bg-[#d0c400]" />
        <span className="ml-auto w-[14px] border-l-2 border-black"><span className="mt-[3px] block h-[2px] bg-black" /></span>
      </div>
      <svg className="mr-[26px] block h-[7px] w-[1005px] max-w-full" viewBox="0 0 1005 7" preserveAspectRatio="none" aria-hidden="true">
        {Array.from({ length: 61 }, (_, i) => (
          <path key={i} d={`M${Math.round(i * 16.67) + 3.5} 0V${i % 3 ? 3 : 6}`} stroke={i % 3 ? "#6a6a6a" : "#999"} strokeWidth={i % 3 ? 1 : 2} />
        ))}
      </svg>
      <div className="flex text-[14px] leading-5 text-[#9b9b9b]">
        <span className="w-7 shrink-0">dB</span>
        {DB.map((db) => (
          <span key={db} className="w-0 flex-1 text-center">{db}</span>
        ))}
      </div>
    </section>
  );
}

export default function App() {
  return (
    <div className="flex h-screen flex-col overflow-hidden bg-[#171717] text-[#8f8f8f] [font-family:'Noto_Sans_CJK_SC',sans-serif]">
      <TopBars />
      <Toolbar />
      <main className="mt-1 flex min-h-0 flex-1 gap-[6px]">
        <div className="flex w-[365px] shrink-0 flex-col">
          <FilesPanel />
          <MediaPanel />
          <section className="mt-[7px] flex h-[42px] shrink-0 items-center bg-[#232323] pb-[2px] pl-[31px] text-[18px]">视频</section>
        </div>
        <div className="flex min-w-0 flex-1 flex-col gap-[6px]">
          <div className="flex min-h-0 flex-1 gap-[6px]">
            <Editor />
            <SoundPanel />
          </div>
          <div className="flex h-[90px] shrink-0 gap-[5px]">
            <Levels />
            <section className="w-[206px] shrink-0 bg-[#232323] pl-[18px]">
              <div className="flex h-[40px] items-center gap-3 text-[18px] text-[#a8a8a8]">
                选区/视图
                <button aria-label="选区菜单" className="pt-[3px]"><Menu size={18} /></button>
              </div>
            </section>
          </div>
        </div>
      </main>
      <footer className="mt-1 flex h-[22px] shrink-0 items-start overflow-hidden whitespace-nowrap bg-[#232323] text-[17px] leading-[27px]">
        <span className="flex-1 text-[18px]">保存已完成，用时 <span className="text-[17px]">0.03</span> 秒</span>
        <span className="w-[75px] border-l border-[#303030]">&nbsp;</span>
        <span className="w-[186px] border-l border-[#303030]">&nbsp;</span>
        <span className="w-[223px] border-l border-[#303030] pl-3">
          48000 Hz <span className="[font-family:'DejaVu_Sans',sans-serif] text-[13px]">●</span> 32 位混合
        </span>
        <span className="w-[97px] border-l border-[#303030] pl-3">84.00 MB</span>
        <span className="w-[98px] border-l border-[#303030] pl-6">3:49.375</span>
        <span className="w-[13px] border-l border-[#303030]">&nbsp;</span>
      </footer>
    </div>
  );
}
